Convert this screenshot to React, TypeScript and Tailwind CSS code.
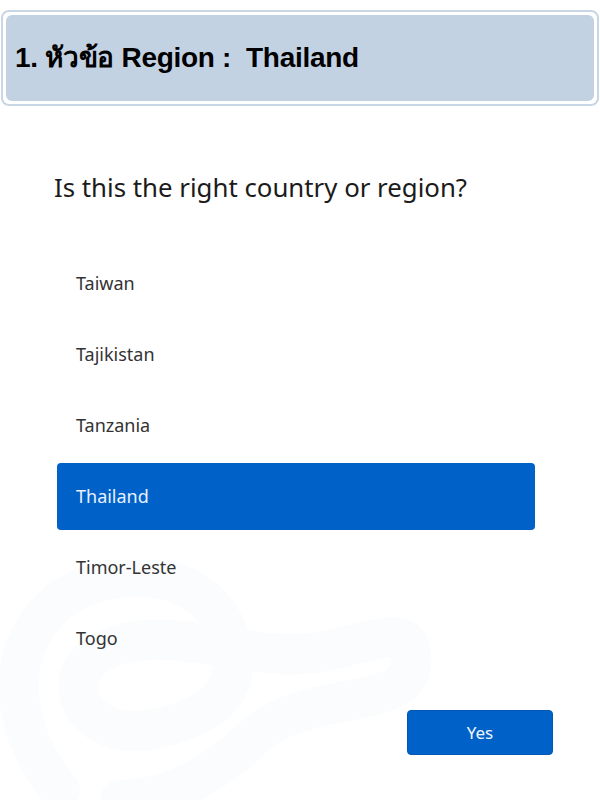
const countries = ['Taiwan', 'Tajikistan', 'Tanzania', 'Thailand', 'Timor-Leste', 'Togo'];

export default function App() {
  const selected = 'Thailand';

  return (
    <div className="relative h-[800px] w-[600px] overflow-hidden bg-white">
      {/* very faint background swirl */}
      <svg className="absolute left-0 top-[560px] pointer-events-none" width="600" height="240" viewBox="0 0 600 240">
        <path
          d="M60 230 C10 170 0 90 60 40 C120 0 210 10 230 80 C245 140 200 160 150 170 C90 180 60 130 90 100 C150 50 250 110 330 90 C380 80 420 60 410 110 C400 150 300 130 250 180 C210 220 160 240 120 240"
          fill="none"
          stroke="#fbfcfd"
          strokeWidth="40"
          strokeLinecap="round"
        />
      </svg>

      <div className="relative mx-[1px] mt-[10px] rounded-[8px] border-2 border-[#c8d6e6] bg-white p-[3px]">
        <div className="flex h-[86px] items-center rounded-[6px] bg-[#c3d2e3] pl-[9px]">
          <h1 className="font-['Liberation_Sans','Noto_Sans',sans-serif] text-[28px] font-bold tracking-[-0.3px] text-black">
            1. หัวข้อ Region :&nbsp; Thailand
          </h1>
        </div>
      </div>

      <div className="relative px-[57px] pt-[65px] font-['Noto_Sans','Open_Sans',sans-serif]">
        <h2 className="-ml-[3px] text-[25.8px] leading-[32px] text-[#1b1b1b]">Is this the right country or region?</h2>

        <ul className="mt-[47px] flex w-[478px] flex-col gap-[4px]">
          {countries.map((c) => (
            <li
              key={c}
              className={
                c === selected
                  ? 'flex h-[67px] items-center rounded-[4px] bg-[#0062c8] pl-[19px] text-[18px] text-[#e8f1ff]'
                  : 'flex h-[67px] items-center pl-[19px] text-[18px] text-[#333333]'
              }
            >
              {c}
            </li>
          ))}
        </ul>

        <div className="mt-[38px] flex justify-end">
          <button className="-mr-[10px] h-[45px] w-[146px] rounded-[4px] border border-[#0057b8] bg-[#0062c8] text-[17px] text-[#f0f6ff]">
            Yes
          </button>
        </div>
      </div>
    </div>
  );
}
